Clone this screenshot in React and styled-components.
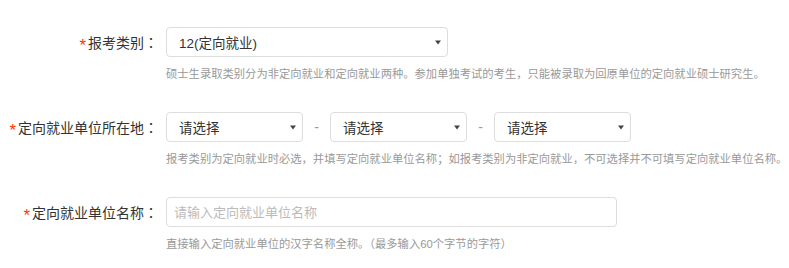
import React from "react";
import styled, { createGlobalStyle } from "styled-components";

const GlobalStyle = createGlobalStyle`
  html, body {
    margin: 0;
    padding: 0;
    background: #fff;
  }
  body {
    font-family: "Liberation Sans", "Noto Sans CJK SC", sans-serif;
    color: #333;
  }
`;

const Arrow = () => (
  <svg width="6" height="5" viewBox="0 0 6 5">
    <path d="M0 0.5 H6 L3 4.5 Z" fill="#444" />
  </svg>
);

const Select = ({ value, width }) => (
  <StyledSelect $width={width}>
    <span>{value}</span>
    <Arrow />
  </StyledSelect>
);

const Label = ({ children }) => (
  <StyledLabel>
    <StyledStar>*</StyledStar>
    {children}
    <StyledColon>：</StyledColon>
  </StyledLabel>
);

export default function App() {
  return (
    <StyledForm>
      <GlobalStyle />
      <StyledRow>
        <Label>报考类别</Label>
        <StyledField>
          <Select value="12(定向就业)" width={282} />
          <StyledHelp>
            硕士生录取类别分为非定向就业和定向就业两种。参加单独考试的考生，只能被录取为回原单位的定向就业硕士研究生。
          </StyledHelp>
        </StyledField>
      </StyledRow>

      <StyledRow>
        <Label>定向就业单位所在地</Label>
        <StyledField>
          <StyledGroup>
            <Select value="请选择" width={137} />
            <StyledDash>-</StyledDash>
            <Select value="请选择" width={137} />
            <StyledDash>-</StyledDash>
            <Select value="请选择" width={137} />
          </StyledGroup>
          <StyledHelp>
            报考类别为定向就业时必选，并填写定向就业单位名称；如报考类别为非定向就业，不可选择并不可填写定向就业单位名称。
          </StyledHelp>
        </StyledField>
      </StyledRow>

      <StyledRow>
        <Label>定向就业单位名称</Label>
        <StyledField>
          <StyledInput placeholder="请输入定向就业单位名称" />
          <StyledHelp>
            直接输入定向就业单位的汉字名称全称。（最多输入60个字节的字符）
          </StyledHelp>
        </StyledField>
      </StyledRow>
    </StyledForm>
  );
}

const StyledForm = styled.div`
  display: flex;
  flex-direction: column;
  gap: 29px;
  padding-top: 27px;
`;

const StyledRow = styled.div`
  display: flex;
  align-items: flex-start;
  gap: 8px;
`;

const StyledLabel = styled.div`
  flex: 0 0 158px;
  height: 30px;
  display: flex;
  align-items: center;
  justify-content: flex-end;
  font-size: 14px;
  color: #333;
  white-space: nowrap;
`;

const StyledStar = styled.span`
  color: #f30;
  font-family: "Liberation Sans", sans-serif;
  font-size: 17px;
  line-height: 1;
  margin-right: 2px;
  transform: translateY(3px);
`;

const StyledColon = styled.span`
  width: 14px;
  text-align: center;
  font-family: "Noto Sans CJK TC", sans-serif;
`;

const StyledField = styled.div`
  display: flex;
  flex-direction: column;
  gap: 8px;
`;

const StyledGroup = styled.div`
  display: flex;
  align-items: center;
`;

const StyledSelect = styled.div`
  box-sizing: border-box;
  width: ${(p) => p.$width}px;
  height: 30px;
  border: 1px solid #ddd;
  border-radius: 4px;
  background: #fff;
  display: flex;
  align-items: center;
  justify-content: space-between;
  padding: 0 6px 0 12px;
  font-size: 13.5px;
  color: #333;
`;

const StyledDash = styled.span`
  width: 27px;
  text-align: center;
  font-size: 14px;
  color: #999;
`;

const StyledInput = styled.input`
  box-sizing: border-box;
  width: 451px;
  height: 30px;
  border: 1px solid #ddd;
  border-radius: 4px;
  padding: 0 7px;
  font-family: "Liberation Sans", "Noto Sans CJK SC", sans-serif;
  font-size: 13px;
  outline: none;

  &::placeholder {
    color: #bbb;
  }
`;

const StyledHelp = styled.div`
  font-size: 11.3px;
  line-height: 18px;
  color: #999;
  white-space: nowrap;
`;
